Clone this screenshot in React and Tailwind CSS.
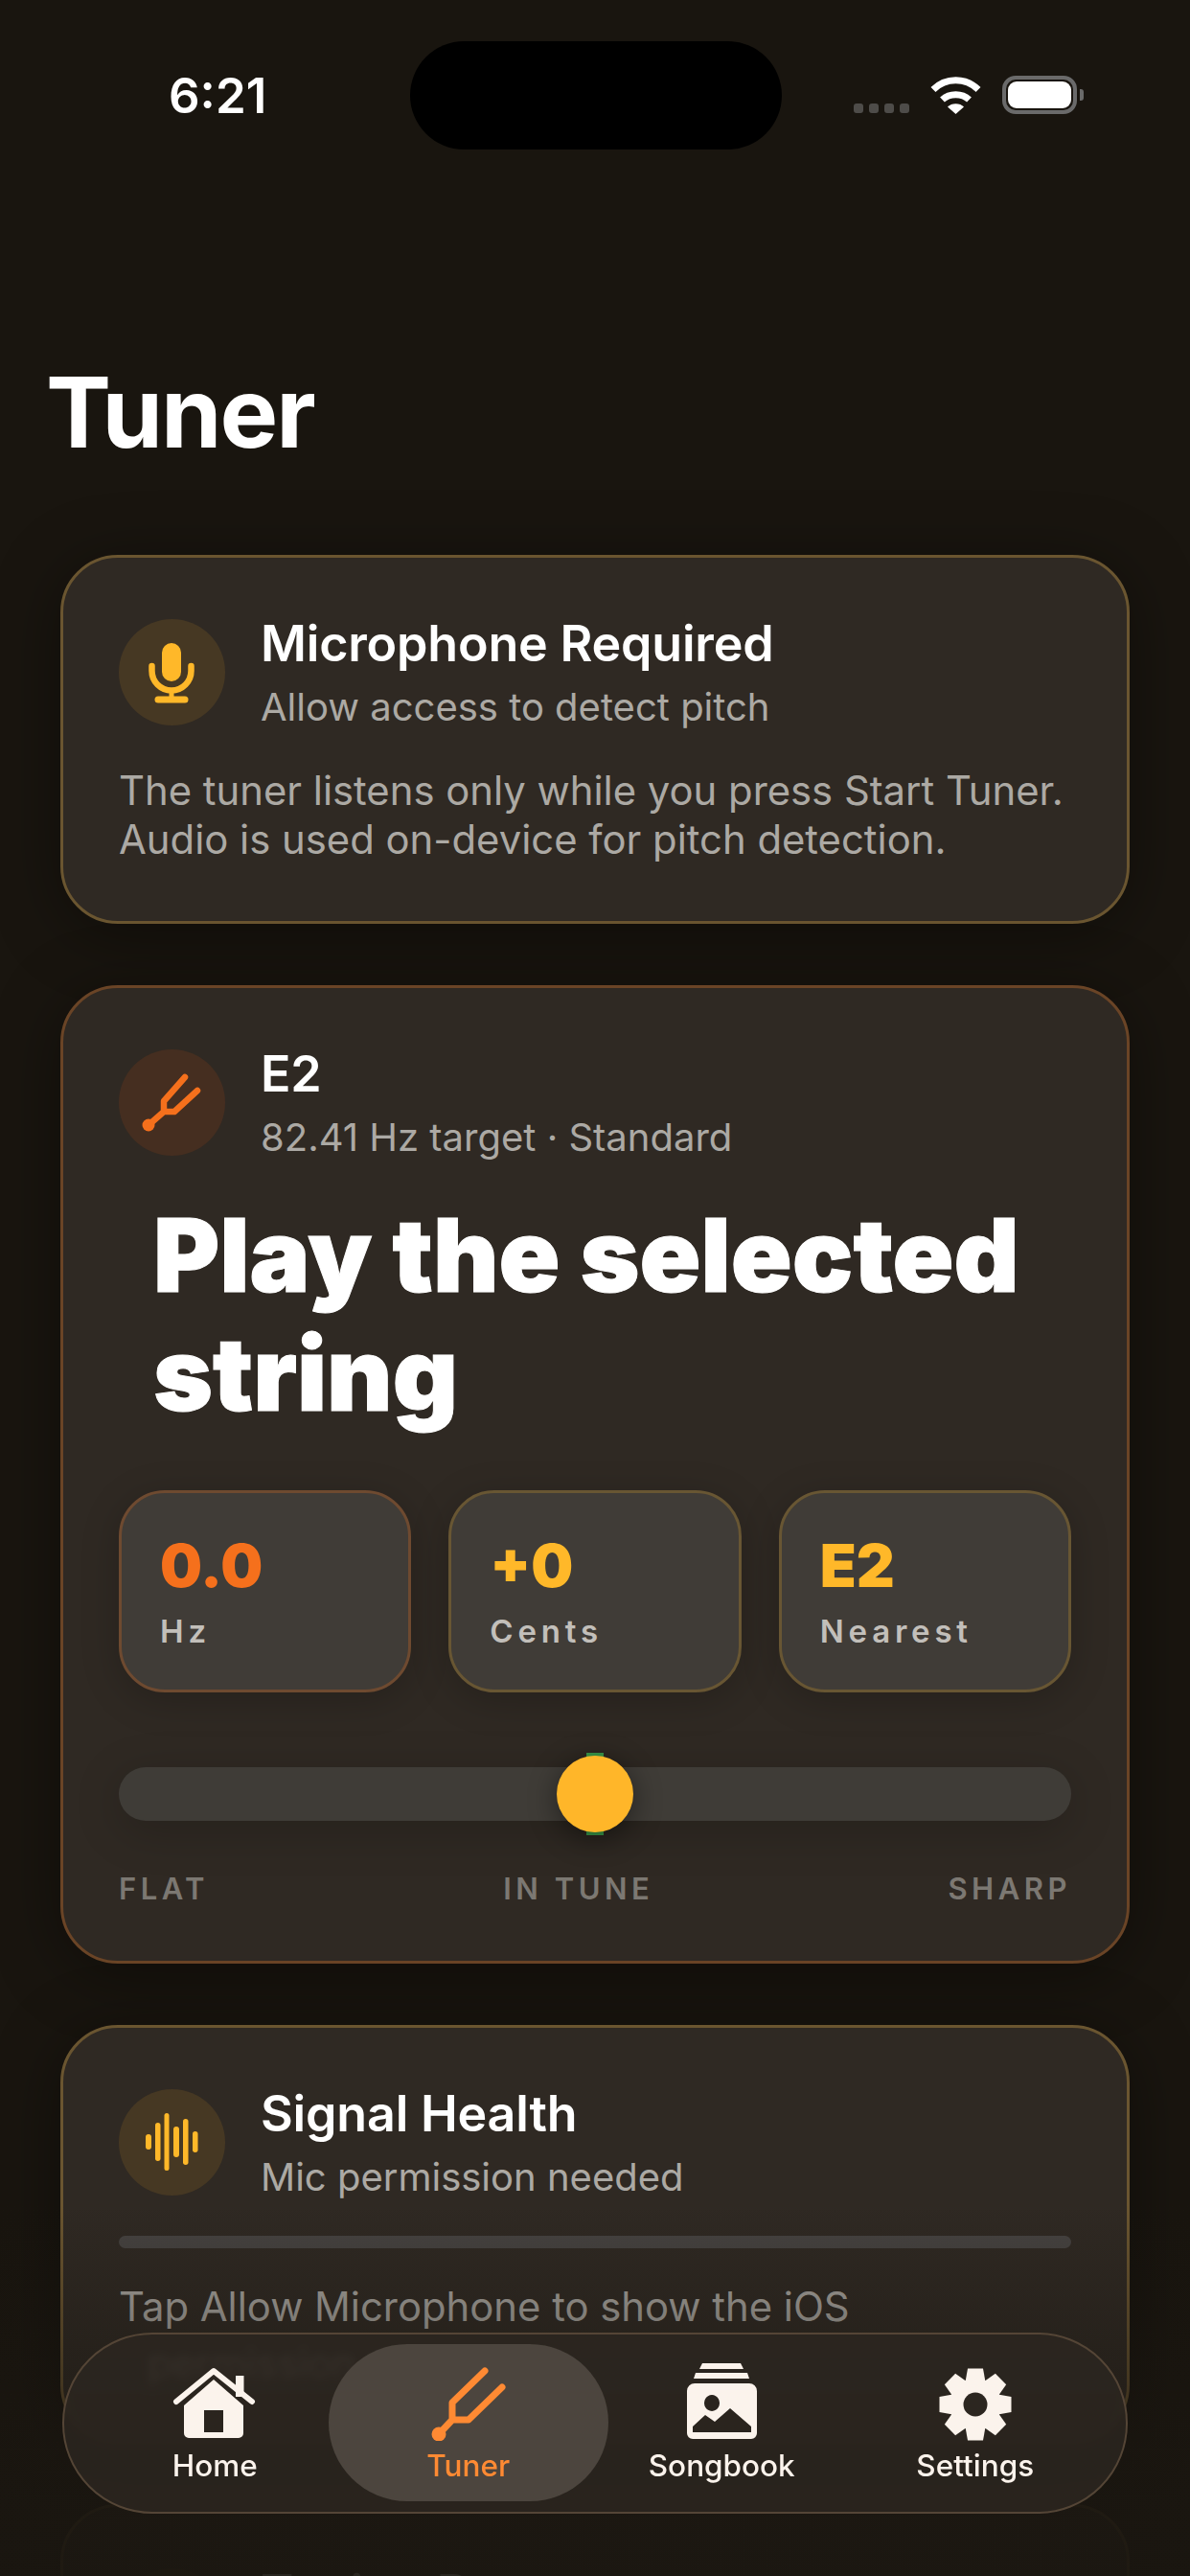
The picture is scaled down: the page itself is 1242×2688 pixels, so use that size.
import React from "react";

const Mic = () => (
  <svg viewBox="0 0 111 111" className="w-[111px] h-[111px]" fill="none" stroke="#ffb829" strokeLinecap="round">
    <rect x="45" y="25" width="20" height="40" rx="10" fill="#ffb829" stroke="none" />
    <path d="M34.5 49v5a20.5 20.5 0 0 0 41 0v-5" strokeWidth="6.5" />
    <path d="M55 75v9" strokeWidth="5" />
    <path d="M41 84h28" strokeWidth="7" />
  </svg>
);

const Fork = () => (
  <svg viewBox="0 0 111 111" className="w-[111px] h-[111px]" fill="none" stroke="#f5701c" strokeLinecap="round" strokeLinejoin="round">
    <circle cx="31" cy="79" r="6.5" fill="#f5701c" stroke="none" />
    <path d="M31 79L47 65H58L82 43M47 65V54L69 29" strokeWidth="6.5" />
  </svg>
);

const Wave = () => (
  <svg viewBox="0 0 111 111" className="w-[111px] h-[111px]" fill="#ffb829">
    <rect x="28" y="47" width="6" height="16" rx="3" />
    <rect x="38" y="35" width="5.5" height="40" rx="2.75" />
    <rect x="47.5" y="25" width="5" height="60" rx="2.5" />
    <rect x="57" y="39" width="6" height="32" rx="3" />
    <rect x="67" y="31" width="5.5" height="48" rx="2.75" />
    <rect x="77" y="44" width="5.5" height="22" rx="2.75" />
  </svg>
);

const HomeIcon = () => (
  <svg viewBox="0 0 90 78" className="w-[90px] h-[78px]" fill="#fbf3ec">
    <path d="M67 10h8.5v22H67z" />
    <path fillRule="evenodd" d="M44 14L75 41V70a5 5 0 0 1-5 5H18a5 5 0 0 1-5-5V41zM34 46v23h20V46z" />
    <path d="M5 37L44 5L84 37" fill="none" stroke="#fbf3ec" strokeWidth="6" strokeLinecap="round" strokeLinejoin="round" />
  </svg>
);

const NavFork = () => (
  <svg viewBox="0 0 90 78" className="w-[90px] h-[78px]" fill="none" stroke="#ff8a33" strokeLinecap="round" strokeLinejoin="round">
    <circle cx="14" cy="71" r="7.5" fill="#ff8a33" stroke="none" />
    <path d="M14 71L28 56H45L80 22M28 56V38L62 5" strokeWidth="7" />
  </svg>
);

const SongbookIcon = () => (
  <svg viewBox="0 0 78 82" className="w-[78px] h-[82px]" fill="#fbf3ec">
    <path d="M19 1h40l3 6H16z" />
    <path d="M12 11h54l2 6H10z" />
    <path fillRule="evenodd" d="M11 22h57a8 8 0 0 1 8 8v44a6 6 0 0 1-6 6H9a6 6 0 0 1-6-6V30a8 8 0 0 1 8-8zM29 34a8 8.5 0 1 0 .01 0zM9 73V67L22 55L32 62L48 48L70 67V73z" />
  </svg>
);

const GearIcon = () => {
  const teeth = [0, 45, 90, 135, 180, 225, 270, 315];
  return (
    <svg viewBox="0 0 76 76" className="w-[76px] h-[76px]">
      <circle cx="38" cy="38" r="27" fill="#fbf3ec" />
      {teeth.map((a) => (
        <path key={a} d="M30 0.5h16l2.5 14h-21z" fill="#fbf3ec" transform={`rotate(${a} 38 38)`} />
      ))}
      <circle cx="38" cy="38" r="12.5" fill="#2c2620" />
    </svg>
  );
};

const Wifi = () => (
  <svg viewBox="0 0 53 39" className="w-[53px] h-[39px]" fill="none" stroke="#fff">
    <path d="M3 13.5C16 0.5 37 0.5 50 13.5" strokeWidth="7" />
    <path d="M12.5 24C20 17 33 17 40.5 24" strokeWidth="7" />
    <path d="M18 31.5C22 27 31 27 35 31.5L26.5 39z" fill="#fff" stroke="none" />
  </svg>
);

const Card = ({ tone, children, extra }) => (
  <div
    className={`rounded-[60px] border-[3px] bg-[#2f2923] px-[58px] pt-[64px] shadow-[0_10px_70px_rgba(0,0,0,0.38)] ${
      tone === "orange" ? "border-[#6a4426]" : "border-[#6a5530]"
    } ${extra}`}
  >
    {children}
  </div>
);

const Header = ({ icon, tint, title, sub }) => (
  <div className="flex items-start gap-[37px] h-[111px]">
    <div className={`w-[111px] h-[111px] shrink-0 rounded-full ${tint}`}>{icon}</div>
    <div className="flex flex-col mt-[-4px]">
      <div className="text-[52px] leading-[60px] font-semibold tracking-[-0.2px] text-white">{title}</div>
      <div className="mt-[11px] text-[40px] leading-[50px] text-[#aca9a4]">{sub}</div>
    </div>
  </div>
);

const Stat = ({ value, label, color, border }) => (
  <div className={`rounded-[48px] border-[3px] ${border} bg-[#403c37] h-[211px] pl-[40px] pt-[40px] shadow-[0_8px_40px_rgba(0,0,0,0.2)]`}>
    <div className={`text-[62px] leading-[72px] font-black ${color}`}>{value}</div>
    <div className="mt-[12px] text-[33px] leading-[40px] font-semibold tracking-[4.8px] text-[#c2bfba]">{label}</div>
  </div>
);

const NavItem = ({ icon, label, color }) => (
  <div className="relative flex flex-col items-center">
    <div className="h-[82px] flex items-end">{icon}</div>
    <div className={`mt-[6px] text-[31.5px] leading-[40px] font-medium ${color}`}>{label}</div>
  </div>
);

export default function App() {
  return (
    <div className="relative w-[1242px] h-[2688px] overflow-hidden bg-[#19150f] font-['Inter','Noto_Sans',sans-serif]">
      {/* Status bar */}
      <div className="flex items-center pt-[43px] pl-[176px]">
        <div className="w-[252px] text-[51px] leading-[60px] font-semibold text-white">6:21</div>
        <div className="w-[388px] h-[113px] rounded-[57px] bg-black" />
        <div className="ml-[75px] flex items-end gap-[22px] mt-[-1px]">
          <div className="flex gap-[6px] mb-[1px]">
            <div className="w-[10px] h-[10px] rounded-[3px] bg-[#4e4c49]" />
            <div className="w-[10px] h-[10px] rounded-[3px] bg-[#4e4c49]" />
            <div className="w-[10px] h-[10px] rounded-[3px] bg-[#4e4c49]" />
            <div className="w-[10px] h-[10px] rounded-[3px] bg-[#4e4c49]" />
          </div>
          <Wifi />
          <div className="flex items-center gap-[3px]">
            <div className="w-[78px] h-[40px] rounded-[14px] border-[4px] border-[#6a6a6a] p-[2px]">
              <div className="w-full h-full rounded-[9px] bg-white" />
            </div>
            <div className="w-[4px] h-[12px] rounded-r-[3px] bg-[#6a6a6a]" />
          </div>
        </div>
      </div>

      {/* Title */}
      <h1 className="mt-[214px] mb-[89px] pl-[48px] text-[102px] leading-[120px] font-bold tracking-[-2px] text-white">Tuner</h1>

      {/* Cards */}
      <div className="flex flex-col gap-[64px] ml-[63px] w-[1116px]">
        <Card tone="gold" extra="pb-[59px]">
          <Header icon={<Mic />} tint="bg-[#463823]" title="Microphone Required" sub="Allow access to detect pitch" />
          <p className="mt-[43px] text-[41.8px] leading-[51px] text-[#aca9a4]">
            The tuner listens only while you press Start Tuner.
            <br />
            Audio is used on-device for pitch detection.
          </p>
        </Card>

        <Card tone="orange" extra="pb-[55px]">
          <Header icon={<Fork />} tint="bg-[#452e20]" title="E2" sub="82.41 Hz target · Standard" />
          <div className="mt-[42px] pl-[36px] text-[105.5px] leading-[124px] font-black text-white [-webkit-text-stroke:1px_white]">
            Play the selected
            <br />
            string
          </div>
          <div className="mt-[59px] grid grid-cols-3 gap-[39px]">
            <Stat value="0.0" label="Hz" color="text-[#f5701c]" border="border-[#6e4a30]" />
            <Stat value="+0" label="Cents" color="text-[#ffb829]" border="border-[#685633]" />
            <Stat value="E2" label="Nearest" color="text-[#ffb829]" border="border-[#685633]" />
          </div>
          <div className="relative mt-[78px] h-[56px] rounded-full bg-[#3f3c37] shadow-[0_10px_50px_rgba(0,0,0,0.2)]">
            <div className="absolute left-1/2 top-[-15px] -translate-x-1/2 w-[18px] h-[86px] bg-[#3a9a4a]" />
            <div className="absolute left-1/2 top-[-12px] -translate-x-1/2 w-[80px] h-[80px] rounded-full bg-[#ffb629] shadow-[0_6px_30px_rgba(0,0,0,0.45)]" />
          </div>
          <div className="mt-[51px] flex justify-between text-[31px] leading-[40px] font-semibold tracking-[4.5px] text-[#7c7872]">
            <span>FLAT</span>
            <span>IN TUNE</span>
            <span>SHARP</span>
          </div>
        </Card>

        <Card tone="gold" extra="pb-[62px]">
          <Header icon={<Wave />} tint="bg-[#463823]" title="Signal Health" sub="Mic permission needed" />
          <div className="mt-[42px] h-[13px] rounded-full bg-[#464341]" />
          <p className="mt-[36px] text-[41.8px] leading-[51px] text-[#aca9a4]">
            Tap Allow Microphone to show the iOS
            <br />
            <span className="inline-block translate-x-[30px] translate-y-[8px]">permission prompt.</span>
          </p>
        </Card>

        <Card tone="gold" extra="pb-[60px]">
          <Header icon={<Wave />} tint="bg-[#463823]" title="Tuning Presets" sub="Standard" />
        </Card>
      </div>

      {/* Bottom fade */}
      <div className="absolute left-0 right-0 bottom-0 h-[388px] bg-gradient-to-b from-[#1a161000] via-[#1a16108c] via-55% to-[#1a1610ee] to-80%" />

      {/* Tab bar */}
      <nav className="absolute left-[65px] top-[2434px] w-[1112px] h-[189px] rounded-[94px] border-[2px] border-[#544536] bg-[#2c2620d8] backdrop-blur-[5px] px-[25px] pt-[29px] grid grid-cols-4">
        <NavItem icon={<HomeIcon />} label="Home" color="text-[#fbf3ec]" />
        <div className="relative">
          <div className="absolute left-[-14px] right-[-14px] top-[-19px] h-[164px] rounded-[82px] bg-[#4c453e]" />
          <NavItem icon={<NavFork />} label="Tuner" color="text-[#ff8a33]" />
        </div>
        <NavItem icon={<SongbookIcon />} label="Songbook" color="text-[#fbf3ec]" />
        <NavItem icon={<GearIcon />} label="Settings" color="text-[#fbf3ec]" />
      </nav>
    </div>
  );
}
